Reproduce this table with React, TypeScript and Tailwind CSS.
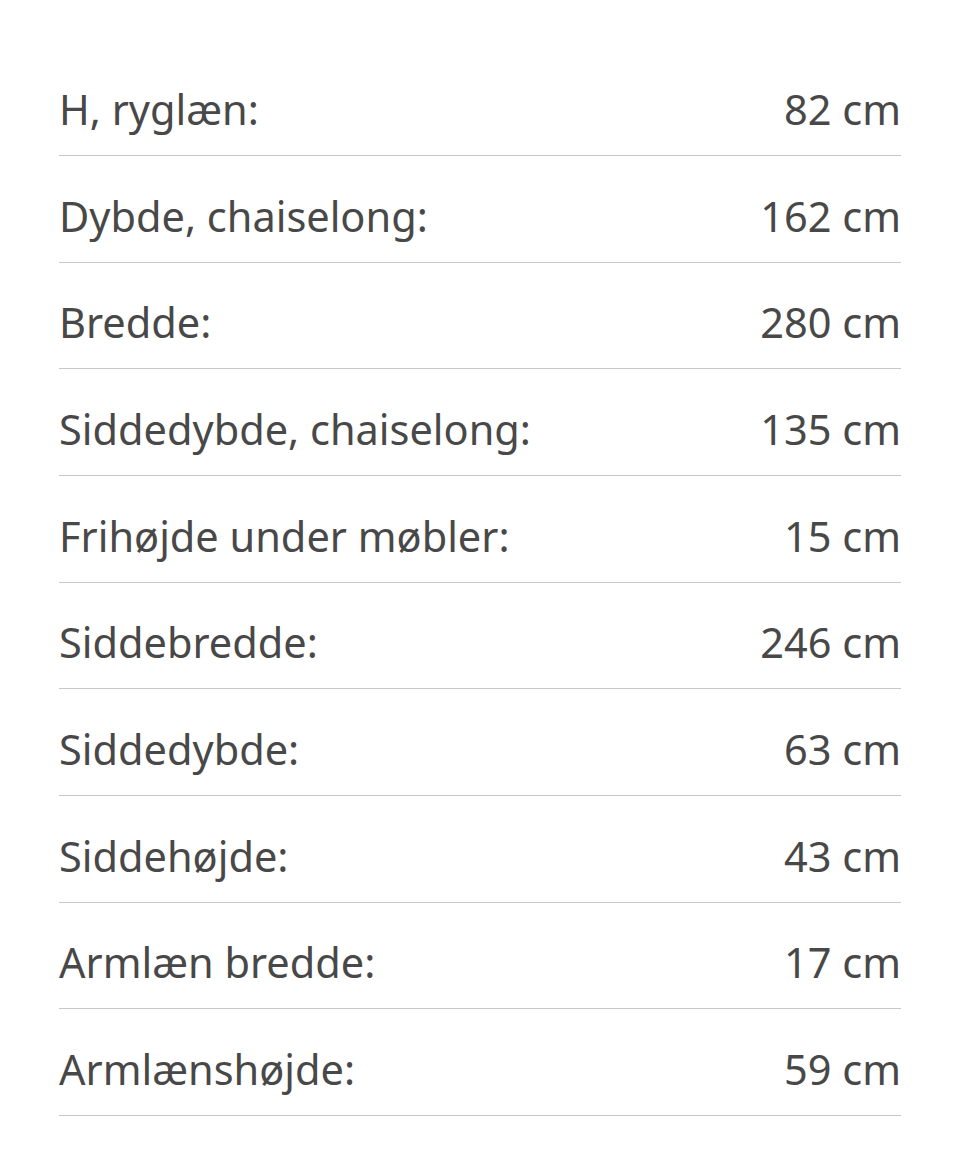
import React from "react";

const rows: [string, string][] = [
  ["H, ryglæn:", "82 cm"],
  ["Dybde, chaiselong:", "162 cm"],
  ["Bredde:", "280 cm"],
  ["Siddedybde, chaiselong:", "135 cm"],
  ["Frihøjde under møbler:", "15 cm"],
  ["Siddebredde:", "246 cm"],
  ["Siddedybde:", "63 cm"],
  ["Siddehøjde:", "43 cm"],
  ["Armlæn bredde:", "17 cm"],
  ["Armlænshøjde:", "59 cm"],
];

export default function App() {
  return (
    <div
      className="w-[960px] h-[1155px] bg-white pt-[49.33px] pl-[59px] pr-[59px] text-[#484848]"
      style={{ fontFamily: '"Noto Sans", "Open Sans", sans-serif' }}
    >
      {rows.map(([k, v]) => (
        <div
          key={k}
          className="flex h-[106.67px] items-center justify-between border-b border-[#c8c8c8] pt-[15px] text-[41.5px] leading-none"
        >
          <span>{k}</span>
          <span>{v}</span>
        </div>
      ))}
    </div>
  );
}
